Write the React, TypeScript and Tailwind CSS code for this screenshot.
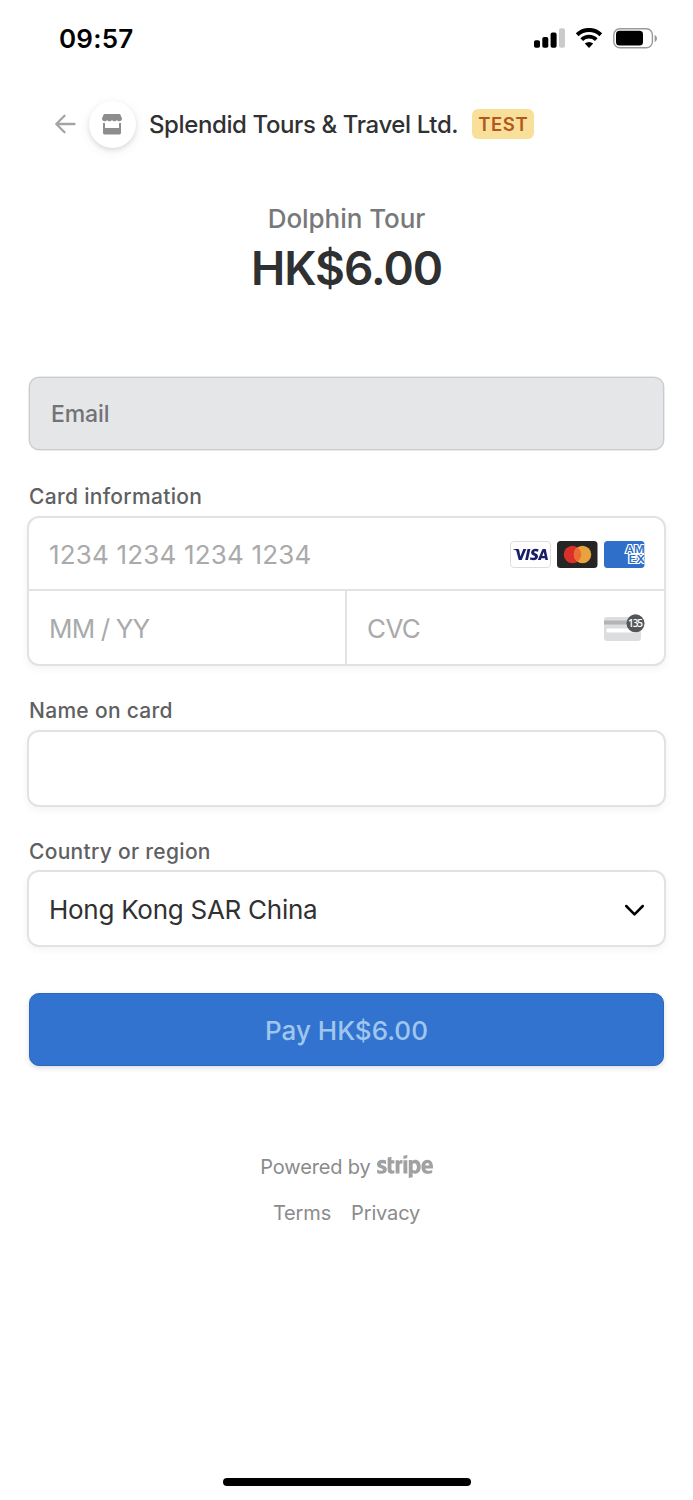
import { FaStripe } from 'react-icons/fa';
import { SiVisa } from 'react-icons/si';

function StatusBar() {
  return (
    <div className="flex h-[76px] items-center justify-between pl-[59px] pr-[36px]">
      <span className="pt-px text-[26px] font-semibold leading-none tracking-[0.2px] text-black">09:57</span>
      <div className="flex items-center">
        {/* Signal */}
        <svg width="31" height="20" viewBox="0 0 31 20">
          <rect x="0" y="12.2" width="6" height="7.6" rx="1.8" fill="#000" />
          <rect x="8.3" y="9" width="6" height="10.8" rx="1.8" fill="#000" />
          <rect x="16.6" y="4.6" width="6" height="15.2" rx="1.8" fill="#000" />
          <rect x="25" y="0.2" width="6" height="19.6" rx="1.8" fill="#cbcbcc" />
        </svg>
        {/* Wi-Fi */}
        <svg className="ml-[10px]" width="28" height="20" viewBox="0 0 28 20">
          <path d="M2.200 6.700a17 17 0 0 1 23.600 0" fill="none" stroke="#000" strokeWidth="4" />
          <path d="M6.700 11.600a10.400 10.400 0 0 1 14.600 0" fill="none" stroke="#000" strokeWidth="3.800" />
          <path d="M9.800 15.600a6.200 6.200 0 0 1 8.400 0L14 19.900z" fill="#000" />
        </svg>
        {/* Battery */}
        <svg className="ml-[10px]" width="44" height="21" viewBox="0 0 44 21">
          <rect x="0.8" y="0.8" width="38.6" height="19" rx="6" fill="none" stroke="#9a9a9b" strokeWidth="1.4" />
          <rect x="3" y="2.8" width="27" height="14.6" rx="3.5" fill="#000" />
          <path d="M41.600 7v7c1.500-.6 2.400-2 2.400-3.500s-.9-2.900-2.400-3.500z" fill="#9a9a9b" />
        </svg>
      </div>
    </div>
  );
}

function MerchantHeader() {
  return (
    <header className="flex h-24 items-center pl-[55px]">
      <svg width="21" height="20" viewBox="0 0 21 20" fill="none" stroke="#a3a4a5" strokeWidth="2.3" strokeLinecap="round" strokeLinejoin="round">
        <path d="M19.500 10H1.500M9.500 1.800L1.300 10l8.200 8.200" />
      </svg>
      <div className="ml-[13px] flex size-[47px] items-center justify-center rounded-full bg-white shadow-[0_2px_4px_rgba(60,66,87,0.14),0_3px_12px_rgba(60,66,87,0.08)]">
        <svg className="-ml-px" width="20" height="21" viewBox="0 0 20 21" fill="#8c8d8e">
          <path d="M3 0h14c.8 0 1.300.4 1.600 1.100L20 4.500c0 1.700-1.200 2.800-2.700 2.800-1 0-1.900-.5-2.400-1.300-.5.800-1.400 1.300-2.400 1.300S10.500 6.800 10 6c-.5.800-1.400 1.300-2.500 1.300S5.600 6.800 5.100 6c-.5.800-1.400 1.300-2.400 1.300C1.200 7.300 0 6.200 0 4.500l1.400-3.400C1.700.4 2.200 0 3 0z" />
          <path d="M1 9h2v5h14V9h2v9.700c0 1-.7 1.700-1.700 1.700H2.700c-1 0-1.700-.7-1.700-1.700z" />
        </svg>
      </div>
      <h1 className="ml-[13px] whitespace-nowrap pt-[2px] text-[24px] font-medium leading-none tracking-[-0.39px] text-[#303132]">
        Splendid Tours &amp; Travel Ltd.
      </h1>
      <span className="ml-[14px] flex h-[30px] w-[62px] items-center justify-center rounded-[6px] bg-[#f8e09b] pt-px text-[18.5px] font-semibold leading-none tracking-[0.6px] text-[#b3571d]">
        TEST
      </span>
    </header>
  );
}

function CardBrands() {
  return (
    <div className="flex gap-[6px] pt-px">
      <div className="flex h-[27px] w-[41px] items-center justify-center rounded-[4px] border border-[#dcdde0] bg-white">
        <SiVisa className="size-[35px] text-[#171e6c]" />
      </div>
      <svg width="41" height="27" viewBox="0 0 41 27">
        <rect width="40.5" height="27" rx="3.5" fill="#252525" />
        <circle cx="15.5" cy="13.5" r="8.7" fill="#d9302a" />
        <circle cx="25.5" cy="13.5" r="8.7" fill="#e9a33d" />
        <path d="M20.500 6.380a8.700 8.700 0 0 1 0 14.240 8.700 8.700 0 0 1 0-14.240z" fill="#ec6b35" />
      </svg>
      <svg width="41" height="27" viewBox="0 0 41 27" fontFamily="Inter, sans-serif">
        <clipPath id="amex">
          <rect width="40.5" height="27" rx="3.5" />
        </clipPath>
        <g clipPath="url(#amex)">
          <rect width="41" height="27" fill="#306fc9" />
          <g fontSize="7.7" fontWeight="600" fill="#306fc9" stroke="#fff" strokeWidth="1.7" paintOrder="stroke">
            <text transform="translate(21.500 12.300) scale(1.500 1.250)">AM</text>
            <text transform="translate(24.500 21.900) scale(1.650 1.250)">EX</text>
          </g>
        </g>
      </svg>
    </div>
  );
}

function CvcIcon() {
  return (
    <svg width="41" height="28" viewBox="0 0 41 28" fontFamily="Open Sans, sans-serif">
      <rect y="3" width="37" height="24" rx="3" fill="#dcdddf" />
      <rect y="6.5" width="37" height="4" fill="#b3b4b5" />
      <rect x="2.5" y="14.5" width="30" height="4" rx="1" fill="#fff" />
      <circle cx="31.5" cy="9.3" r="9" fill="#545556" />
      <text x="24" y="13" textLength="15" fontSize="10" fontWeight="600" fill="#fff">135</text>
    </svg>
  );
}

function Label({ text }: { text: string }) {
  return <div className="pl-[29px] text-[21px] font-medium leading-[26px] tracking-[0.3px] text-[#5f6062]">{text}</div>;
}

export default function App() {
  return (
    <div className="flex h-[1500px] w-[693px] flex-col bg-white font-['Inter',sans-serif]">
      <StatusBar />
      <MerchantHeader />

      {/* Product summary */}
      <section className="mt-[29px] flex flex-col items-center">
        <div className="text-[26px] font-medium leading-9 tracking-[-0.05px] text-[#77787a]">Dolphin Tour</div>
        <div className="mt-[3px] text-[46px] font-semibold leading-[56px] tracking-[-1px] text-[#2f3031]">HK$6.00</div>
      </section>

      <div className="mx-[29px] mt-[81px] flex h-[73px] items-center rounded-[10px] border border-[#c9cbce] bg-[#e5e6e8] pl-[21px] pt-px text-[23px] font-medium tracking-[-0.1px] text-[#727375] shadow-[0_0_0_0.5px_#d5d7da]">
        Email
      </div>

      {/* Card details */}
      <div className="mt-[34px]">
        <Label text="Card information" />
        <div className="mx-[27px] mt-[6px] h-[150px] rounded-[12px] border-2 border-[#e1e2e4] bg-white text-[26px] text-[#a9aaab] shadow-[0_3px_7px_rgba(60,66,87,0.06)]">
          <div className="flex h-[73px] items-center justify-between border-b-2 border-[#e1e2e4] pl-5 pr-[19px]">
            <span className="pt-[2px] tracking-[0.18px]">1234 1234 1234 1234</span>
            <CardBrands />
          </div>
          <div className="flex h-[73px]">
            <div className="flex w-[318px] items-center border-r-2 border-[#e1e2e4] pl-5 pt-[2px] tracking-[-0.85px]">MM / YY</div>
            <div className="flex flex-1 items-center justify-between pl-5 pr-[19px]">
              <span className="pt-[2px] tracking-[-0.6px]">CVC</span>
              <CvcIcon />
            </div>
          </div>
        </div>
      </div>

      <div className="mt-[32px]">
        <Label text="Name on card" />
        <div className="mx-[27px] mt-[6px] h-[77px] rounded-[12px] border-2 border-[#e1e2e4] bg-white shadow-[0_3px_7px_rgba(60,66,87,0.06)]" />
      </div>

      <div className="mt-[32px]">
        <Label text="Country or region" />
        <div className="mx-[27px] mt-[5px] flex h-[77px] items-center justify-between rounded-[12px] border-2 border-[#e1e2e4] bg-white pl-5 pr-[19px] text-[26px] text-[#303132] shadow-[0_3px_7px_rgba(60,66,87,0.06)]">
          <span className="pt-px tracking-[-0.27px]">Hong Kong SAR China</span>
          <svg className="mt-1" width="21" height="13" viewBox="0 0 21 13" fill="none" stroke="#000" strokeWidth="2.5" strokeLinecap="round" strokeLinejoin="round">
            <path d="M2.200 2l8.300 8.300L18.800 2" />
          </svg>
        </div>
      </div>

      <button className="mx-[29px] mt-[46px] h-[73px] rounded-[10px] border border-[#2c68bc] bg-[#3173cf] pt-[2px] text-[26px] font-medium text-[#a0c6ee] shadow-[0_2px_5px_rgba(60,66,87,0.18)]">
        Pay HK$6.00
      </button>

      <footer className="mt-[87px] text-[20px] text-[#8a8b8d]">
        <div className="flex h-[26px] items-center justify-center">
          <span className="pt-px tracking-[-0.15px]">Powered by</span>
          <FaStripe className="ml-[6px] h-[45px] w-[56px] text-[#a0a1a2]" />
        </div>
        <div className="mt-[21px] flex h-[26px] items-center justify-center gap-5 tracking-[-0.15px]">
          <span>Terms</span>
          <span>Privacy</span>
        </div>
      </footer>

      <div className="mx-auto mb-[14px] mt-auto h-[8px] w-[248px] rounded-full bg-black" />
    </div>
  );
}
